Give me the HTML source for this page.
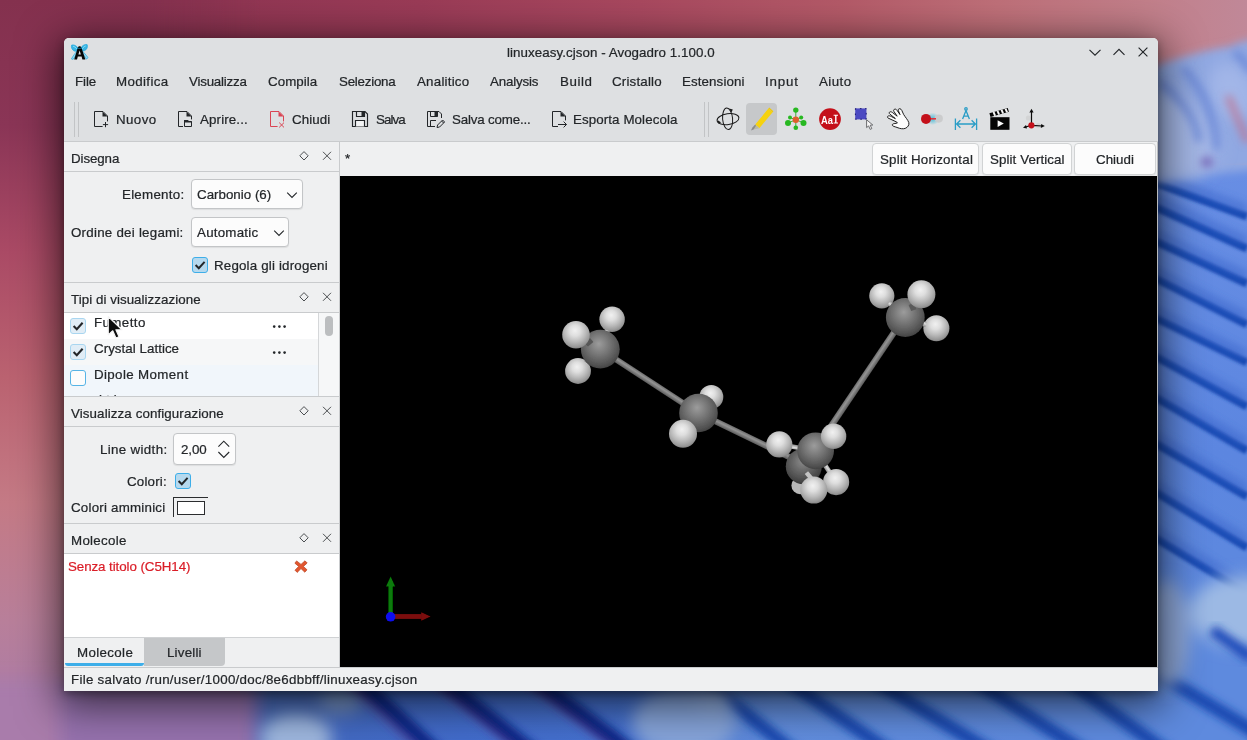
<!DOCTYPE html>
<html><head><meta charset="utf-8"><title>Avogadro</title>
<style>
html,body{margin:0;padding:0;}
body{width:1247px;height:740px;overflow:hidden;position:relative;background:#9a3b57;font-family:"Liberation Sans",sans-serif;font-size:13.33px;color:#232629;}
.a{position:absolute;}
.t{position:absolute;white-space:pre;line-height:16px;font-size:13.33px;color:#232629;will-change:transform;-webkit-text-stroke:0.22px #232629;}
svg{position:absolute;overflow:visible;}
</style></head><body>
<svg class="a" style="left:0;top:0" width="1247" height="740" viewBox="0 0 1247 740">
<defs>
<linearGradient id="wTop" x1="0" y1="0" x2="1" y2="0">
<stop offset="0" stop-color="#84314e"/><stop offset=".16" stop-color="#8f3552"/><stop offset=".337" stop-color="#9a3b57"/>
<stop offset=".513" stop-color="#a8485f"/><stop offset=".674" stop-color="#b45a68"/><stop offset=".80" stop-color="#bf7079"/>
<stop offset=".92" stop-color="#c27f8a"/><stop offset="1" stop-color="#c08898"/>
</linearGradient>
<linearGradient id="wLeft" x1="0" y1="0" x2="0" y2="1">
<stop offset="0" stop-color="#84314e"/><stop offset=".17" stop-color="#8a3556"/><stop offset=".34" stop-color="#aa4a65"/>
<stop offset=".51" stop-color="#ba6270"/><stop offset=".68" stop-color="#c47a85"/><stop offset=".84" stop-color="#b87f9a"/>
<stop offset="1" stop-color="#a77aaa"/>
</linearGradient>
<linearGradient id="wLeftFade" x1="0" y1="0" x2="1" y2="0">
<stop offset="0" stop-color="#fff" stop-opacity="1"/><stop offset=".5" stop-color="#fff" stop-opacity="1"/><stop offset="1" stop-color="#fff" stop-opacity="0"/>
</linearGradient>
<mask id="mLeft"><rect x="0" y="0" width="260" height="740" fill="url(#wLeftFade)"/></mask>
<linearGradient id="wStripe" x1="0" y1="0" x2="0" y2="1">
<stop offset="0" stop-color="#688ee4"/><stop offset=".5" stop-color="#5c86e0"/><stop offset=".85" stop-color="#5e8ade"/><stop offset="1" stop-color="#5e8ade"/>
</linearGradient>
<linearGradient id="wBot" x1="0" y1="0" x2="1" y2="0">
<stop offset="0" stop-color="#4468bc"/><stop offset=".25" stop-color="#426ccc"/><stop offset=".45" stop-color="#4672d0"/><stop offset=".6" stop-color="#628ede"/><stop offset=".88" stop-color="#5e8ade"/><stop offset="1" stop-color="#5e8ade"/>
</linearGradient>
<filter id="b2" x="-20%" y="-20%" width="140%" height="140%"><feGaussianBlur stdDeviation="1.6"/></filter>
<filter id="b4" x="-30%" y="-30%" width="160%" height="160%"><feGaussianBlur stdDeviation="4"/></filter>
<filter id="b8" x="-30%" y="-30%" width="160%" height="160%"><feGaussianBlur stdDeviation="8"/></filter>
<filter id="b14" x="-40%" y="-40%" width="180%" height="180%"><feGaussianBlur stdDeviation="14"/></filter>
</defs>
<rect width="1247" height="740" fill="url(#wTop)"/>
<rect width="260" height="740" fill="url(#wLeft)" mask="url(#mLeft)"/>
<rect x="1130" y="165" width="117" height="575" fill="url(#wStripe)"/>
<!-- bottom strip -->
<g id="bottomstrip">
<rect x="240" y="650" width="892" height="90" fill="url(#wBot)"/>
<g filter="url(#b8)">
<rect x="-30" y="680" width="100" height="90" fill="#a97cab"/>
<rect x="60" y="680" width="196" height="90" fill="#9672ae"/>
<rect x="262" y="670" width="60" height="90" fill="#4a6cba"/>
</g>
<g filter="url(#b8)">
<ellipse cx="296" cy="738" rx="36" ry="24" fill="#9db6de"/>
<ellipse cx="340" cy="700" rx="22" ry="14" fill="#7693c6"/>
</g>
<g filter="url(#b4)" fill="none">
<g stroke="#0a2888" stroke-width="15">
<path d="M348 670 L442 758"/><path d="M430 670 L540 758"/><path d="M522 670 L640 758"/>
</g>
<g stroke="#5a2f78" stroke-width="3" opacity=".6">
<path d="M344 676 L436 764" transform="translate(-6 -2)"/><path d="M425 675 L535 763" transform="translate(-5 -2)"/><path d="M517 675 L635 763" transform="translate(-5 -2)"/>
</g>
<g stroke="#1846b0" stroke-width="13">
<path d="M706 682 L800 757"/><path d="M772 670 L900 759"/><path d="M857 670 L1003 759"/><path d="M959 670 L1095 759"/><path d="M1054 670 L1176 759"/><path d="M1150 669 L1260 735"/>
</g>
</g>
<g filter="url(#b8)">
<ellipse cx="684" cy="722" rx="52" ry="34" fill="#86a4da"/>
<ellipse cx="712" cy="700" rx="18" ry="14" fill="#8eaadc"/>
</g>
</g>
<!-- right strip -->
<g id="rightstrip">
<g filter="url(#b2)" stroke="#1549b2" stroke-width="8" fill="none" transform="translate(0 -2.5)">
<path d="M1130 176 L1247 219"/><path d="M1130 198 L1247 251"/><path d="M1130 232 L1247 286"/>
<path d="M1130 268 L1247 327"/><path d="M1130 308 L1247 365"/><path d="M1130 345 L1247 409"/>
<path d="M1130 385 L1247 453"/><path d="M1130 431 L1247 499"/><path d="M1130 479 L1247 550"/>
<path d="M1130 525 L1247 596"/>
</g>
<g filter="url(#b4)" stroke="#3d68cc" stroke-width="7" fill="none" opacity=".8" transform="translate(0 -2.5)">
<path d="M1130 169 L1247 212"/><path d="M1130 191 L1247 244"/><path d="M1130 225 L1247 279"/>
<path d="M1130 261 L1247 320"/><path d="M1130 301 L1247 358"/><path d="M1130 338 L1247 402"/>
<path d="M1130 378 L1247 446"/><path d="M1130 424 L1247 492"/><path d="M1130 472 L1247 543"/>
<path d="M1130 518 L1247 589"/>
</g>
<!-- puffy top ribbon -->
<g filter="url(#b4)">
<path d="M1140 72 Q1190 52 1232 46 Q1244 38 1270 40 L1270 168 L1140 182 Z" fill="#90a8e2"/>
</g>
<g filter="url(#b8)">
<path d="M1150 96 Q1196 84 1222 150 L1200 176 L1150 178 Z" fill="#a4b7e6"/>
<ellipse cx="1232" cy="92" rx="22" ry="30" fill="#a2b6e8" transform="rotate(-25 1232 92)"/>
</g>
<g filter="url(#b4)" fill="none" stroke="#5b7cd4" stroke-width="6" opacity=".8">
<path d="M1183 68 Q1214 100 1217 150"/>
<path d="M1160 82 Q1196 112 1199 142"/>
<path d="M1234 52 Q1246 60 1250 72"/>
</g>
<g filter="url(#b4)"><path d="M1228 96 Q1238 120 1248 142" stroke="#c0708c" stroke-width="7" fill="none" opacity=".75"/>
<ellipse cx="1207" cy="162" rx="6" ry="4.5" fill="#7460b4"/></g>
<!-- lower blobs -->
<g filter="url(#b8)">
<ellipse cx="1166" cy="634" rx="24" ry="54" fill="#8ea7d8"/>
<ellipse cx="1240" cy="612" rx="50" ry="36" fill="#9cb9e4"/>
</g>
<g filter="url(#b4)" fill="none"><path d="M1212 630 L1252 658" stroke="#1c46b8" stroke-width="11"/></g>
</g>
</svg>
<style>
.win{left:64px;top:38px;width:1094px;height:653px;background:#eff0f1;border-radius:5px 5px 0 0;box-shadow:0 3px 9px rgba(0,0,0,.34),0 9px 40px 6px rgba(0,0,0,.62);}
.hdr{left:64px;top:38px;width:1094px;height:103px;background:#dee0e2;border-radius:5px 5px 0 0;}
.hl{height:1px;background:#c9cbcd;}
.vl{width:1px;background:#c9cbcd;}
.combo{background:#fcfcfc;border:1px solid #c3c5c7;border-radius:4px;box-sizing:border-box;box-shadow:0 1px 1px rgba(0,0,0,.08);}
.btn{background:#fcfcfc;border:1px solid #d1d3d4;border-radius:4px;box-sizing:border-box;box-shadow:0 1px 1px rgba(0,0,0,.06);}
.cb{width:16px;height:16px;box-sizing:border-box;border:1px solid #3daee9;border-radius:3px;background:#b6d9ee;}
.cb.l{background:#e1edf6;border-color:#a9d6f0;}
.cb.u{background:#fcfcfc;border-color:#57b4e6;}
</style>
<div class="a win"></div>
<div class="a hdr"></div>
<div class="a hl" style="left:64px;top:141px;width:1094px;"></div>
<!-- toolbar handles -->
<div class="a vl" style="left:74px;top:102px;height:35px;background:#c2c4c6"></div>
<div class="a vl" style="left:78px;top:102px;height:35px;background:#c2c4c6"></div>
<div class="a vl" style="left:704px;top:102px;height:35px;background:#c2c4c6"></div>
<div class="a vl" style="left:708px;top:102px;height:35px;background:#c2c4c6"></div>
<!-- pencil highlighted -->
<div class="a" style="left:746px;top:103px;width:31px;height:32px;background:#c6c8ca;border-radius:4px"></div>
<!-- dock -->
<div class="a vl" style="left:339px;top:142px;height:525px;"></div>
<div class="a hl" style="left:64px;top:171px;width:275px;"></div>
<div class="a combo" style="left:191px;top:179px;width:112px;height:30px;"></div>
<div class="a combo" style="left:191px;top:217px;width:98px;height:30px;"></div>
<div class="a cb" style="left:192px;top:257px;"></div>
<div class="a hl" style="left:64px;top:282px;width:275px;"></div>
<div class="a hl" style="left:64px;top:312px;width:275px;"></div>
<!-- list -->
<div class="a" style="left:64px;top:313px;width:254px;height:26px;background:#fff"></div>
<div class="a" style="left:64px;top:339px;width:254px;height:26px;background:#f6f7f8"></div>
<div class="a" style="left:64px;top:365px;width:254px;height:31px;background:#f1f6fb"></div>
<div class="a vl" style="left:318px;top:313px;height:83px;background:#d5d7d9"></div>
<div class="a" style="left:319px;top:313px;width:20px;height:83px;background:#f6f7f8"></div>
<div class="a" style="left:325px;top:316px;width:8px;height:20px;background:#bcbec0;border-radius:4px"></div>
<div class="a cb l" style="left:70px;top:318px;"></div>
<div class="a cb l" style="left:70px;top:344px;"></div>
<div class="a cb u" style="left:70px;top:370px;"></div>
<div class="a hl" style="left:64px;top:396px;width:275px;"></div>
<div class="a hl" style="left:64px;top:426px;width:275px;"></div>
<div class="a combo" style="left:173px;top:433px;width:63px;height:32px;"></div>
<div class="a cb" style="left:175px;top:473px;"></div>
<!-- colour frame -->
<div class="a" style="left:173px;top:497px;width:35px;height:1px;background:#2b2d2f"></div>
<div class="a" style="left:173px;top:497px;width:1px;height:20px;background:#2b2d2f"></div>
<div class="a" style="left:177px;top:501px;width:28px;height:14px;background:#fff;border:1px solid #2b2d2f;box-sizing:border-box"></div>
<div class="a hl" style="left:64px;top:523px;width:275px;"></div>
<div class="a hl" style="left:64px;top:553px;width:275px;"></div>
<div class="a" style="left:64px;top:554px;width:275px;height:83px;background:#fff"></div>
<div class="a hl" style="left:64px;top:637px;width:275px;background:#d0d2d4"></div>
<!-- tabs -->
<div class="a" style="left:144px;top:638px;width:81px;height:28px;background:#c5c7c9;border-radius:0 0 4px 0"></div>
<div class="a" style="left:65px;top:663px;width:79px;height:3px;border-radius:0 0 3px 3px;background:#3daee9"></div>
<div class="a hl" style="left:64px;top:667px;width:1094px;"></div>
<!-- view -->
<div class="a btn" style="left:872px;top:143px;width:107px;height:32px;"></div>
<div class="a btn" style="left:982px;top:143px;width:90px;height:32px;"></div>
<div class="a btn" style="left:1074px;top:143px;width:82px;height:32px;"></div>
<div class="a" style="left:340px;top:176px;width:817px;height:491px;background:#000"></div>
<div class="a vl" style="left:1157px;top:142px;height:526px;background:#b9bbbd"></div>
<span class="t" style="left:506.50px;top:44.78px;letter-spacing:0.066px;">linuxeasy.cjson - Avogadro 1.100.0</span>
<span class="t" style="left:74.50px;top:74.18px;letter-spacing:-0.105px;">File</span>
<span class="t" style="left:115.50px;top:74.18px;letter-spacing:0.362px;">Modifica</span>
<span class="t" style="left:189.00px;top:74.18px;letter-spacing:-0.205px;">Visualizza</span>
<span class="t" style="left:268.25px;top:74.18px;letter-spacing:0.046px;">Compila</span>
<span class="t" style="left:339.00px;top:74.18px;letter-spacing:-0.234px;">Seleziona</span>
<span class="t" style="left:417.25px;top:74.18px;letter-spacing:0.223px;">Analitico</span>
<span class="t" style="left:490.25px;top:74.18px;letter-spacing:-0.174px;">Analysis</span>
<span class="t" style="left:559.50px;top:74.18px;letter-spacing:0.569px;">Build</span>
<span class="t" style="left:612.00px;top:74.18px;letter-spacing:0.190px;">Cristallo</span>
<span class="t" style="left:681.50px;top:74.18px;letter-spacing:0.108px;">Estensioni</span>
<span class="t" style="left:764.75px;top:74.18px;letter-spacing:0.827px;">Input</span>
<span class="t" style="left:819.25px;top:74.18px;letter-spacing:0.446px;">Aiuto</span>
<span class="t" style="left:115.50px;top:111.68px;letter-spacing:0.409px;">Nuovo</span>
<span class="t" style="left:200.00px;top:111.68px;letter-spacing:0.130px;">Aprire...</span>
<span class="t" style="left:292.00px;top:111.68px;letter-spacing:0.085px;">Chiudi</span>
<span class="t" style="left:375.50px;top:111.68px;letter-spacing:-0.919px;">Salva</span>
<span class="t" style="left:451.50px;top:111.68px;letter-spacing:-0.170px;">Salva come...</span>
<span class="t" style="left:573.00px;top:111.68px;letter-spacing:0.096px;">Esporta Molecola</span>
<span class="t" style="left:71.40px;top:151.08px;letter-spacing:-0.098px;">Disegna</span>
<span class="t" style="left:121.60px;top:187.18px;letter-spacing:0.262px;">Elemento:</span>
<span class="t" style="left:197.40px;top:187.18px;letter-spacing:0.014px;">Carbonio (6)</span>
<span class="t" style="left:71.40px;top:224.88px;letter-spacing:0.244px;">Ordine dei legami:</span>
<span class="t" style="left:197.40px;top:224.88px;letter-spacing:0.238px;">Automatic</span>
<span class="t" style="left:213.70px;top:257.98px;letter-spacing:0.181px;">Regola gli idrogeni</span>
<span class="t" style="left:71.40px;top:292.18px;letter-spacing:0.055px;">Tipi di visualizzazione</span>
<span class="t" style="left:94.30px;top:315.08px;letter-spacing:0.404px;">Fumetto</span>
<span class="t" style="left:94.30px;top:340.88px;letter-spacing:0.041px;">Crystal Lattice</span>
<span class="t" style="left:94.30px;top:366.88px;letter-spacing:0.372px;">Dipole Moment</span>
<span class="t" style="left:71.40px;top:406.18px;letter-spacing:0.107px;">Visualizza configurazione</span>
<span class="t" style="left:100.00px;top:442.48px;letter-spacing:0.338px;">Line width:</span>
<span class="t" style="left:181.10px;top:442.48px;letter-spacing:-0.109px;">2,00</span>
<span class="t" style="left:127.40px;top:474.48px;letter-spacing:0.182px;">Colori:</span>
<span class="t" style="left:71.40px;top:500.08px;letter-spacing:0.219px;">Colori amminici</span>
<span class="t" style="left:71.10px;top:532.68px;letter-spacing:0.282px;">Molecole</span>
<span class="t" style="left:68.00px;top:558.68px;letter-spacing:-0.067px;color:#da1e28;-webkit-text-stroke-color:#da1e28;">Senza titolo (C5H14)</span>
<span class="t" style="left:76.80px;top:645.18px;letter-spacing:0.353px;">Molecole</span>
<span class="t" style="left:167.10px;top:645.18px;letter-spacing:0.205px;">Livelli</span>
<span class="t" style="left:71.10px;top:671.88px;letter-spacing:0.280px;">File salvato /run/user/1000/doc/8e6dbbff/linuxeasy.cjson</span>
<span class="t" style="left:879.60px;top:152.18px;letter-spacing:0.215px;">Split Horizontal</span>
<span class="t" style="left:989.60px;top:152.18px;letter-spacing:0.094px;">Split Vertical</span>
<span class="t" style="left:1096.00px;top:152.18px;letter-spacing:0.015px;">Chiudi</span>
<span class="t" style="left:344.50px;top:150.68px;letter-spacing:0.000px;">*</span>
<!-- app icon -->
<svg style="left:70.5px;top:44.2px" width="17" height="16" viewBox="0 0 17 16">
<path d="M7.9 5.6 C6.6 2.6 3.6 .4 .7 1 C-.2 3.2 1 6 3.4 7 C4.8 7.5 6.4 7 7.9 5.6Z" fill="#3ab4e2" stroke="#1aa7e0" stroke-width=".7"/>
<path d="M9.3 5.6 C10.2 2.4 13 -.1 16.2 .7 C17 3 15.8 5.6 13.6 6.6 C12.2 7.2 10.6 6.8 9.3 5.6Z" fill="#3ab4e2" stroke="#1aa7e0" stroke-width=".7"/>
<path d="M2.2 2.4 C3.6 2.6 5 3.6 5.8 5 M14.6 2 C13.2 2.4 12 3.4 11.4 4.8" stroke="#8fe6ff" stroke-width=".9" fill="none"/>
<path d="M6.6 6.4 C4.6 8.6 1.6 12.4 .5 15 C1.2 15.6 2 15.5 2.6 15 C3.8 12.6 5.8 9.2 7.4 7Z" fill="#9adcf2" stroke="#1aa7e0" stroke-width=".7"/>
<path d="M10.6 6.4 C12.6 8.4 15.6 11.4 16.8 13.4 C16.6 14.4 16 15 15.2 15 C14 12.8 11.6 9.4 9.8 7Z" fill="#9adcf2" stroke="#1aa7e0" stroke-width=".7"/>
<path d="M8.6 2.2 C9.6 2.2 10.2 2.8 10.5 3.8 L14.4 15.4 H11.4 L10.6 12.6 H6.8 L6 15.4 H3.2 L6.7 3.8 C7 2.8 7.6 2.2 8.6 2.2Z M8.6 6.4 L7.4 10.4 H9.9Z" fill="#060606" fill-rule="evenodd"/>
<path d="M5.4 3.6 C7 4.6 9.6 4.8 11.8 3.4" stroke="#1aa7e0" stroke-width=".8" fill="none" opacity=".85"/>
</svg>
<!-- window buttons -->
<svg style="left:1084px;top:42px" width="70" height="20" viewBox="0 0 70 20" fill="none" stroke="#232629" stroke-width="1.15">
<path d="M5.5 7.8 L11 13.2 L16.5 7.8"/>
<path d="M29.5 12.8 L35 7.4 L40.5 12.8"/>
<path d="M54.6 5.6 L63.4 14.4 M63.4 5.6 L54.6 14.4"/>
</svg>
<!-- toolbar: document-new -->
<svg style="left:89px;top:108px" width="22" height="22" viewBox="0 0 22 22" fill="none" stroke="#232629" stroke-width="1">
<path d="M13.6 18.5 H5.5 V3.5 H14 L18.5 8 V13.4" stroke-linejoin="miter"/><path d="M13.5 3.4 V8.5 H18.6 Z" fill="#232629" stroke="none"/>
<path d="M16.5 14 V19.2 M13.9 16.6 H19.1"/>
</svg>
<!-- document-open -->
<svg style="left:173px;top:108px" width="22" height="22" viewBox="0 0 22 22" fill="none" stroke="#232629" stroke-width="1">
<path d="M10 18.5 H5.5 V3.5 H14 L18.5 8 V11.4" stroke-linejoin="miter"/><path d="M13.5 3.4 V8.5 H18.6 Z" fill="#232629" stroke="none"/>
<path d="M11.5 13.5 V18.5 H18.5 V13.5 Z"/><path d="M11 12 H15 L16.2 13.5 H19 V14.6 H11 Z" fill="#232629" stroke="none"/>
</svg>
<!-- document-close -->
<svg style="left:265px;top:108px" width="22" height="22" viewBox="0 0 22 22" fill="none" stroke="#da4453" stroke-width="1">
<path d="M12.6 18.5 H5.5 V3.5 H14 L18.5 8 V13.4" stroke-linejoin="miter"/><path d="M13.5 3.4 V8.5 H18.6 Z" fill="#da4453" stroke="none"/>
<path d="M14.2 14.6 L19 19.4 M19 14.6 L14.2 19.4"/>
</svg>
<!-- document-save -->
<svg style="left:349px;top:108px" width="22" height="22" viewBox="0 0 22 22" fill="none" stroke="#232629" stroke-width="1.15">
<path d="M3.5 3.5 H16 L18.5 6 V18.5 H3.5 Z"/>
<path d="M7.5 3.5 V8.5 H15.5 V3.5" /><rect x="12.5" y="3.5" width="3" height="5" fill="#232629" stroke="none"/>
<path d="M6.5 18.5 V12.5 H15.5 V18.5" fill="#f4f5f6"/>
<path d="M4 4 H7 V9 H16 V4.6 L18 6.4 V18 H16 V12 H6 V18 H4Z" fill="#fbfbfb" stroke="none" opacity=".0"/>
</svg>
<!-- document-save-as -->
<svg style="left:424px;top:108px" width="22" height="22" viewBox="0 0 22 22" fill="none" stroke="#232629" stroke-width="1">
<path d="M11 18.5 H3.5 V3.5 H15 L17.5 6 V10"/>
<path d="M6.5 3.5 V8.5 H13.5 V3.5"/><rect x="10.5" y="3.5" width="3" height="5" fill="#232629" stroke="none"/>
<path d="M6.5 18.5 V12.5 H12"/>
<path d="M13 19.5 L13.6 17 L18.6 12 L20.6 14 L15.6 19 Z M17.6 13 L19.6 15"/>
</svg>
<!-- document-export -->
<svg style="left:547px;top:108px" width="22" height="22" viewBox="0 0 22 22" fill="none" stroke="#232629" stroke-width="1">
<path d="M11 18.5 H5.5 V3.5 H14 L18.5 8 V12.4" stroke-linejoin="miter"/><path d="M13.5 3.4 V8.5 H18.6 Z" fill="#232629" stroke="none"/>
<path d="M11 16.5 H19.4 M16.6 13.6 L19.5 16.5 L16.6 19.4"/>
</svg>
<!-- navigate -->
<svg style="left:715px;top:106px" width="26" height="26" viewBox="0 0 26 26" fill="none" stroke="#1a1a1a" stroke-width="1">
<ellipse cx="13" cy="13.2" rx="11" ry="5.4" transform="rotate(-8 13 13.2)"/>
<ellipse cx="12.6" cy="12.8" rx="5" ry="10.8" transform="rotate(-5 12.6 12.8)"/>
<path d="M14.2 2.4 L17.8 3.4 L16.4 6.4 Z" fill="#1a1a1a" stroke="none"/>
<path d="M2.8 14.2 L6.2 16.6 L3.2 17.6 Z" fill="#1a1a1a" stroke="none"/>
</svg>
<!-- pencil -->
<svg style="left:747px;top:104px" width="30" height="30" viewBox="0 0 30 30">
<path d="M8.2 20.6 L21.4 4.6 L25.6 8.2 L12.4 24.2 Z" fill="#f6d20e"/>
<path d="M8.2 20.6 L12.4 24.2 L6.6 25.4 Z" fill="#b9b9a4"/>
<path d="M6.6 25.4 L4 26.4 L5.4 23.6 L8.2 20.6 L9 21.8 Z" fill="#8b8b8b"/>
<path d="M21.4 4.6 L22.2 3.6 L26.4 7.2 L25.6 8.2Z" fill="#edc80c"/>
</svg>
<!-- manipulate -->
<svg style="left:783px;top:106px" width="26" height="26" viewBox="0 0 26 26">
<g stroke="#3fae3a" stroke-width="1"><path d="M12.8 13.7 V4.1 M12.8 13.7 V21.7 M12.8 13.7 L5 17.1 M12.8 13.7 L20.5 16.9 M12.8 13.7 L7 11.6 M12.8 13.7 L18.2 11.6"/></g>
<circle cx="12.8" cy="4.1" r="2.7" fill="#27b821"/><circle cx="12.8" cy="21.7" r="2.3" fill="#27b821"/>
<circle cx="5" cy="17.1" r="3" fill="#27b821"/><circle cx="20.5" cy="16.9" r="3" fill="#27b821"/>
<circle cx="7" cy="11.6" r="2" fill="#27b821"/><circle cx="18.2" cy="11.6" r="2" fill="#27b821"/>
<circle cx="12.8" cy="13.7" r="3.2" fill="#df5f2d"/>
</svg>
<!-- label -->
<svg style="left:818px;top:107px;will-change:transform" width="24" height="24" viewBox="0 0 24 24">
<circle cx="12" cy="12.1" r="10.9" fill="#c4101a"/>
<text x="2.9" y="16.6" font-family="Liberation Sans" font-weight="bold" font-size="10.6" fill="#fff" textLength="12" lengthAdjust="spacingAndGlyphs">Aa</text>
<path d="M15.6 7.8 H20 V8.8 H18.5 V15.6 H20 V16.6 H15.6 V15.6 H17.1 V8.8 H15.6Z" fill="#fff"/>
</svg>
<!-- select -->
<svg style="left:853px;top:106px" width="24" height="26" viewBox="0 0 24 26">
<rect x="2.2" y="2.4" width="11.2" height="11" fill="#4c4ac2"/>
<rect x="2.4" y="2.6" width="10.8" height="10.6" fill="none" stroke="#1e1c70" stroke-width="1" stroke-dasharray="1.6 3.7" stroke-dashoffset=".8"/>
<path d="M13.6 13.8 L13.6 21.6 L15.6 19.9 L17.2 23.4 L18.8 22.6 L17.2 19.2 L19.8 19 Z" fill="#f6f6f6" stroke="#5c5e61" stroke-width=".9"/>
</svg>
<!-- hand -->
<svg style="left:885px;top:106px" width="26" height="26" viewBox="0 0 26 26">
<path d="M3 12 C2.2 11.4 2.3 10.2 3.4 9.9 C4.4 9.6 5.6 10.2 6.4 10.6 L10.4 12.6 L5 8.2 C3.8 7.4 4 6 5.2 5.8 C6.2 5.6 7 6.2 7.8 6.8 L12.2 10.2 L9 5.6 C8.2 4.4 8.8 3.2 10 3.1 C11 3 11.6 3.8 12.2 4.6 L15 8.6 L13.4 4.8 C12.8 3.6 13.6 2.6 14.8 2.7 C15.8 2.8 16.4 3.6 16.8 4.4 L18.6 8.4 C20.4 11.4 23 14 23.8 16.6 C24.4 19 22.8 21.4 20.2 22.4 C17.8 23.2 15 22.6 13 21.8 C11.4 21.2 10 20.8 8.8 20.4 C7.4 20 6.8 18.8 7.8 18 C8.8 17.4 10.8 17.6 12.4 17 C12.2 16.4 11.8 16 11.2 15.8 Z" fill="#fcfcfc" stroke="#151515" stroke-width=".95" stroke-linejoin="round"/>
</svg>
<!-- bond centric -->
<svg style="left:919px;top:106px" width="26" height="26" viewBox="0 0 26 26">
<defs><radialGradient id="glow"><stop offset="0" stop-color="#39b7d6" stop-opacity=".9"/><stop offset="1" stop-color="#39b7d6" stop-opacity="0"/></radialGradient></defs>
<ellipse cx="13.6" cy="12.8" rx="7" ry="6.2" fill="url(#glow)"/>
<circle cx="19.8" cy="12.6" r="4.1" fill="#cbcccd"/>
<path d="M9 12.8 H17" stroke="#e2323a" stroke-width="1.6"/>
<circle cx="7" cy="12.9" r="5" fill="#c4101a"/>
</svg>
<!-- measure -->
<svg style="left:953px;top:106px" width="26" height="26" viewBox="0 0 26 26" fill="none" stroke="#2a9dc6" stroke-width="1.3">
<path d="M2.4 12.4 V24 M23.6 12.4 V24 M3.6 18 H22.4 M7.4 14.2 L3.6 18 L7.4 21.8 M18.6 14.2 L22.4 18 L18.6 21.8"/>
<path d="M9.6 13 L13 4.6 L16.4 13 M10.8 10.2 H15.2"/><circle cx="13" cy="2.9" r="1.2"/>
</svg>
<!-- clapper -->
<svg style="left:987px;top:106px" width="26" height="26" viewBox="0 0 26 26">
<rect x="3.3" y="11.2" width="19.2" height="12.6" fill="#050505"/>
<path d="M2.4 7.2 L20.8 2 L21.9 5.8 L3.5 11 Z" fill="#050505"/>
<g fill="#fafafa"><path d="M5.6 6.3 L7.5 5.8 L9 9.4 L7.1 9.9Z"/><path d="M9.6 5.2 L11.5 4.7 L13 8.3 L11.1 8.8Z"/><path d="M13.6 4.1 L15.5 3.6 L17 7.2 L15.1 7.7Z"/><path d="M17.6 3 L19.5 2.4 L21 6 L19.1 6.6Z"/></g>
<path d="M10.6 14.2 L16.8 17.6 L10.6 21 Z" fill="#fafafa"/>
</svg>
<!-- axes -->
<svg style="left:1021px;top:106px" width="26" height="26" viewBox="0 0 26 26">
<circle cx="7.4" cy="12" r="2.6" fill="#d3d4d5"/><circle cx="17.4" cy="19.6" r="2.6" fill="#d3d4d5"/>
<g stroke="#0c0c0c" stroke-width="1.2" fill="none"><path d="M10.5 19.3 V5 M10.5 19.3 L21.4 20 M10.5 19.3 L4.4 21"/></g>
<g fill="#0c0c0c"><path d="M10.5 2.8 L12.6 6.6 H8.4Z"/><path d="M23.8 20.1 L19.8 22 L20.2 17.9Z"/><path d="M2 21.8 L5 19 L6 22.4Z"/></g>
<circle cx="10.4" cy="19.3" r="3.1" fill="#c4101a"/>
</svg>
<!-- dock title buttons -->
<svg style="left:296px;top:148px" width="40" height="400" viewBox="0 0 40 400" fill="none" stroke="#4b4e51" stroke-width="1">
<g id="dk"><path d="M8 3.6 L12.2 7.8 L8 12 L3.8 7.8 Z"/><path d="M27 3.8 L35 11.8 M35 3.8 L27 11.8"/></g>
<use href="#dk" y="141"/><use href="#dk" y="255"/><use href="#dk" y="382"/>
</svg>
<!-- combo chevrons -->
<svg style="left:286px;top:190px" width="14" height="10" viewBox="0 0 14 10" fill="none" stroke="#232629" stroke-width="1.1"><path d="M1.2 2.6 L6 7.4 L10.8 2.6"/></svg>
<svg style="left:273px;top:228px" width="14" height="10" viewBox="0 0 14 10" fill="none" stroke="#232629" stroke-width="1.1"><path d="M1.2 2.6 L6 7.4 L10.8 2.6"/></svg>
<!-- spin arrows -->
<svg style="left:217px;top:439px" width="14" height="22" viewBox="0 0 14 22" fill="none" stroke="#232629" stroke-width="1.1"><path d="M1.4 7.6 L6.8 2.2 L12.2 7.6 M1.4 13 L6.8 18.4 L12.2 13"/></svg>
<!-- check marks -->
<svg style="left:192px;top:257px" width="16" height="16" viewBox="0 0 16 16" fill="none" stroke="#232629" stroke-width="2" stroke-linecap="butt"><path d="M3.6 8 L6.8 11.2 L12.6 4.8"/></svg>
<svg style="left:175px;top:473px" width="16" height="16" viewBox="0 0 16 16" fill="none" stroke="#232629" stroke-width="2"><path d="M3.6 8 L6.8 11.2 L12.6 4.8"/></svg>
<svg style="left:70px;top:318px" width="16" height="16" viewBox="0 0 16 16" fill="none" stroke="#232629" stroke-width="2.1"><path d="M3.6 8 L6.8 11.2 L12.6 4.8"/></svg>
<svg style="left:70px;top:344px" width="16" height="16" viewBox="0 0 16 16" fill="none" stroke="#232629" stroke-width="2.1"><path d="M3.6 8 L6.8 11.2 L12.6 4.8"/></svg>
<!-- ellipsis -->
<svg style="left:272px;top:324px" width="16" height="32" viewBox="0 0 16 32" fill="#232629"><circle cx="2.2" cy="2.6" r="1.3"/><circle cx="7.4" cy="2.6" r="1.3"/><circle cx="12.6" cy="2.6" r="1.3"/><circle cx="2.2" cy="28.6" r="1.3"/><circle cx="7.4" cy="28.6" r="1.3"/><circle cx="12.6" cy="28.6" r="1.3"/></svg>
<!-- red X -->
<svg style="left:294px;top:560px" width="14" height="13" viewBox="0 0 14 13"><path d="M2.6 .9 L7 4.4 L11 .8 L13.2 3 L9.4 6.4 L13 9.8 L10.8 12.2 L7 8.6 L3.2 12.4 L1 10.2 L4.7 6.4 L.9 3.2 Z" fill="#e2562f" stroke="#b8401c" stroke-width=".7" stroke-linejoin="round"/></svg>
<!-- mouse cursor -->
<svg style="left:106px;top:315.4px" width="18" height="25.6" viewBox="0 0 16 24" preserveAspectRatio="none"><path d="M2 1.6 V18.6 L6 14.8 L8.8 21.6 L11.6 20.4 L8.8 13.8 H14.2 Z" fill="#0c0c0c" stroke="#f4f4f4" stroke-width="1.1" stroke-linejoin="round"/></svg>
<!-- partial 4th row text bits -->
<div class="a" style="left:99px;top:395px;width:21px;height:1px;overflow:hidden"><span class="t" style="left:0;top:-4px;color:#232629">hidden</span></div>
<svg style="left:340px;top:176px" width="817" height="491" viewBox="340 176 817 491">
<defs>
<radialGradient id="gC" cx=".47" cy=".40" r=".64" fx=".46" fy=".36">
<stop offset="0" stop-color="#9c9c9c"/><stop offset=".25" stop-color="#868686"/><stop offset=".6" stop-color="#666"/><stop offset=".85" stop-color="#4e4e4e"/><stop offset="1" stop-color="#3a3a3a"/>
</radialGradient>
<radialGradient id="gH" cx=".47" cy=".38" r=".66" fx=".46" fy=".34">
<stop offset="0" stop-color="#f1f1f1"/><stop offset=".3" stop-color="#dedede"/><stop offset=".6" stop-color="#bababa"/><stop offset=".85" stop-color="#989898"/><stop offset="1" stop-color="#7a7a7a"/>
</radialGradient>
<linearGradient id="gB" x1="0" y1="0" x2="0" y2="1">
<stop offset="0" stop-color="#6c6c6c"/><stop offset=".4" stop-color="#949494"/><stop offset="1" stop-color="#5a5a5a"/>
</linearGradient>
<linearGradient id="gS" x1="0" y1="0" x2="0" y2="1">
<stop offset="0" stop-color="#a8a8a8"/><stop offset=".4" stop-color="#dcdcdc"/><stop offset="1" stop-color="#8c8c8c"/>
</linearGradient>
<filter id="mb" x="-10%" y="-10%" width="120%" height="120%"><feGaussianBlur stdDeviation=".45"/></filter>
</defs>
<g filter="url(#mb)">
<!-- long bonds: drawn as rotated rects -->
<g id="bonds">
<rect x="0" y="-3" width="117.6" height="6" fill="url(#gB)" transform="translate(600 349) rotate(33.1)"/>
<rect x="0" y="-3" width="117.6" height="6" fill="url(#gB)" transform="translate(698.4 413) rotate(25.9)"/>
<rect x="0" y="-3.1" width="161.5" height="6.2" fill="url(#gB)" transform="translate(815 450) rotate(-56.1)"/>
</g>
<!-- group 1 -->
<circle cx="612.1" cy="319.2" r="12.7" fill="url(#gH)"/>
<circle cx="578" cy="371" r="12.9" fill="url(#gH)"/>
<rect x="0" y="-2.6" width="20" height="5.2" fill="url(#gS)" transform="translate(600.3 349) rotate(-69)"/>
<rect x="0" y="-2.6" width="20" height="5.2" fill="url(#gS)" transform="translate(600.3 349) rotate(135)"/>
<circle cx="600.3" cy="349.2" r="19.4" fill="url(#gC)"/>
<path d="M584 343 L590 338 L593.4 342 L588 346.6Z" fill="#565656"/>
<circle cx="576" cy="334.8" r="13.8" fill="url(#gH)"/>
<!-- group 2 -->
<circle cx="711.3" cy="396.9" r="12" fill="url(#gH)"/>
<circle cx="698.5" cy="413" r="19.3" fill="url(#gC)"/>
<circle cx="683" cy="433.8" r="14" fill="url(#gH)"/>
<!-- group 3/4 -->
<circle cx="800.2" cy="485.4" r="8.8" fill="#b8b8b8"/>
<circle cx="803.8" cy="466.3" r="18" fill="url(#gC)"/>
<circle cx="803.8" cy="466.3" r="18" fill="#000" opacity=".12"/>
<path d="M806.4 472.6 L811.2 478.2" stroke="#c4c4c4" stroke-width="4.4"/>
<rect x="0" y="-2.3" width="30" height="4.6" fill="url(#gS)" transform="translate(815.6 450.8) rotate(-170)"/>
<rect x="0" y="-2.3" width="30" height="4.6" fill="url(#gS)" transform="translate(815.6 450.8) rotate(56.7)"/>
<circle cx="815.6" cy="450.8" r="18.4" fill="url(#gC)"/>
<circle cx="779.3" cy="444.4" r="13.1" fill="url(#gH)"/>
<circle cx="836.1" cy="482.1" r="13.1" fill="url(#gH)"/>
<circle cx="833.6" cy="436.3" r="12.7" fill="url(#gH)"/>
<circle cx="813.8" cy="490.1" r="13.5" fill="url(#gH)"/>
<!-- group 5 -->
<circle cx="881.8" cy="295.8" r="12.6" fill="url(#gH)"/>
<circle cx="936.4" cy="328.3" r="13" fill="url(#gH)"/>
<rect x="0" y="-2.4" width="22" height="4.8" fill="url(#gS)" transform="translate(905.3 317.5) rotate(-137)"/>
<rect x="0" y="-2.4" width="22" height="4.8" fill="url(#gS)" transform="translate(905.3 317.5) rotate(19)"/>
<circle cx="905.3" cy="317.5" r="19.4" fill="url(#gC)"/>
<path d="M908.6 305 L914.4 302.4 L916.4 309.2 L911.2 311Z" fill="#5a5a5a"/>
<circle cx="921.4" cy="294.3" r="14" fill="url(#gH)"/>
</g>
<!-- axes -->
<g filter="url(#mb)">
<rect x="388.4" y="586" width="4.4" height="27" fill="#087a08"/>
<path d="M390.6 576.4 L395.2 586.4 H386 Z" fill="#087a08"/>
<rect x="394" y="614.1" width="27.6" height="4.8" fill="#7c0a0a"/>
<path d="M430.6 616.5 L421.2 612.2 V620.8 Z" fill="#7c0a0a"/>
<circle cx="390.6" cy="616.8" r="4.8" fill="#0c10ee"/>
</g>
</svg>
</body></html>
